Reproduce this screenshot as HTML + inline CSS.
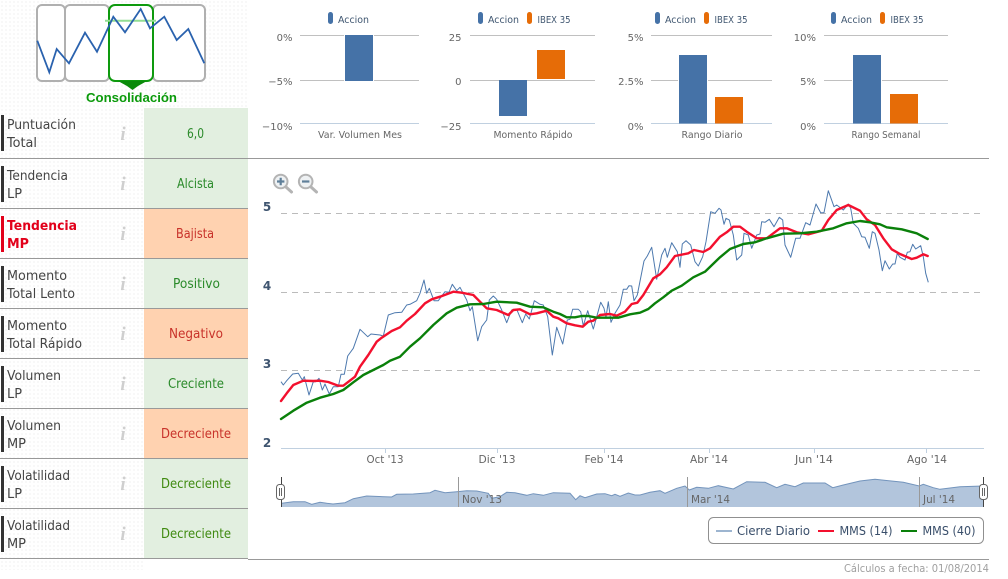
<!DOCTYPE html>
<html lang="es"><head><meta charset="utf-8"><title>Consolidación</title>
<style>
html,body{margin:0;padding:0;background:#fff;width:1008px;height:579px;overflow:hidden}
svg{display:block}
text{font-family:"DejaVu Sans","Liberation Sans",sans-serif}
.lab{font-size:13px;fill:#444}
.val{font-size:13px;text-anchor:middle}
.g{fill:#2a8a2a}.r{fill:#c8322a}
.i{font-family:"Liberation Serif",serif;font-style:italic;font-weight:bold;font-size:19px;fill:#cfcfcf;text-anchor:middle}
.ax{font-size:10px;fill:#666;text-anchor:end}
.cap{font-size:10px;fill:#666;text-anchor:middle}
.lg{font-size:10px;fill:#3f5670}
.tk{font-size:11px;fill:#666;text-anchor:middle}
.nv{font-size:11px;fill:#666}
.le{font-size:12px;fill:#3a4f6b}
.grid{stroke:#c0c0c0;stroke-width:1;fill:none}
</style></head><body>
<svg width="1008" height="579" viewBox="0 0 1008 579" xmlns="http://www.w3.org/2000/svg">
<defs><pattern id="d" width="4" height="4" patternUnits="userSpaceOnUse"><rect x="1" y="1" width="2" height="2" fill="#f8f8f8"/></pattern></defs>
<rect width="1008" height="579" fill="#fff"/>
<rect x="0" y="0" width="248" height="108" fill="url(#d)"/>
<rect x="0" y="108" width="144" height="462" fill="url(#d)"/>

<!-- pattern icon -->
<g fill="#fff" stroke="#b0b0b0" stroke-width="2">
<rect x="37" y="5" width="28" height="76" rx="5"/>
<rect x="65" y="5" width="44" height="76" rx="5"/>
<rect x="153" y="5" width="52" height="76" rx="5"/>
</g>
<rect x="109" y="5" width="44" height="76" rx="6" fill="#fff" stroke="#0e9a0e" stroke-width="2"/>
<path d="M118 81H147L138 86L132.500 90L127 86Z" fill="#0a8a0a"/>
<line x1="105" y1="20.700" x2="156" y2="20.700" stroke="#93de93" stroke-width="2"/>
<polyline fill="none" stroke="#2a62ae" stroke-width="1.800" points="37.300,40.700 49.300,72.300 56.700,49 69,63.300 85,32.700 97,51.700 113.300,16.700 125,32.300 140.700,9 150,28.300 164.300,16.700 176.700,40 188.300,29 204.300,63.300"/>
<text x="86" y="102" font-size="13" font-weight="bold" fill="#0b9a0b" textLength="91" lengthAdjust="spacingAndGlyphs" style="font-family:'Liberation Sans',sans-serif">Consolidación</text>

<!-- table cells -->
<rect x="144" y="108" width="104" height="100" fill="#e2efe0"/>
<rect x="144" y="208" width="104" height="50" fill="#ffd2b0"/>
<rect x="144" y="258" width="104" height="50" fill="#e2efe0"/>
<rect x="144" y="308" width="104" height="50" fill="#ffd2b0"/>
<rect x="144" y="358" width="104" height="50" fill="#e2efe0"/>
<rect x="144" y="408" width="104" height="50" fill="#ffd2b0"/>
<rect x="144" y="458" width="104" height="100" fill="#e2efe0"/>
<g stroke="#999" stroke-width="1">
<line x1="0" y1="158.500" x2="989" y2="158.500"/>
<line x1="0" y1="208.500" x2="248" y2="208.500"/>
<line x1="0" y1="258.500" x2="248" y2="258.500"/>
<line x1="0" y1="308.500" x2="248" y2="308.500"/>
<line x1="0" y1="358.500" x2="248" y2="358.500"/>
<line x1="0" y1="408.500" x2="248" y2="408.500"/>
<line x1="0" y1="458.500" x2="248" y2="458.500"/>
<line x1="0" y1="508.500" x2="248" y2="508.500"/>
<line x1="0" y1="558.500" x2="248" y2="558.500"/>
<line x1="248" y1="559.500" x2="989" y2="559.500"/>
</g>
<g fill="#333">
<rect x="1" y="115" width="3" height="36"/><rect x="1" y="166" width="3" height="36"/>
<rect x="1" y="216" width="3" height="36" fill="#e2001a"/>
<rect x="1" y="266" width="3" height="36"/><rect x="1" y="316" width="3" height="36"/><rect x="1" y="366" width="3" height="36"/><rect x="1" y="416" width="3" height="36"/><rect x="1" y="466" width="3" height="36"/><rect x="1" y="516" width="3" height="36"/>
</g>
<text class="lab" x="7" y="129" textLength="69" lengthAdjust="spacingAndGlyphs">Puntuación</text>
<text class="lab" x="7" y="147" textLength="30" lengthAdjust="spacingAndGlyphs">Total</text>
<text class="lab" x="7" y="180" textLength="61" lengthAdjust="spacingAndGlyphs">Tendencia</text>
<text class="lab" x="7" y="198" textLength="15" lengthAdjust="spacingAndGlyphs">LP</text>
<text class="lab" x="7" y="230" textLength="70" lengthAdjust="spacingAndGlyphs" style="font-weight:bold;fill:#e2001a">Tendencia</text>
<text class="lab" x="7" y="248" textLength="22" lengthAdjust="spacingAndGlyphs" style="font-weight:bold;fill:#e2001a">MP</text>
<text class="lab" x="7" y="280" textLength="60" lengthAdjust="spacingAndGlyphs">Momento</text>
<text class="lab" x="7" y="298" textLength="68" lengthAdjust="spacingAndGlyphs">Total Lento</text>
<text class="lab" x="7" y="330" textLength="60" lengthAdjust="spacingAndGlyphs">Momento</text>
<text class="lab" x="7" y="348" textLength="75" lengthAdjust="spacingAndGlyphs">Total Rápido</text>
<text class="lab" x="7" y="380" textLength="54" lengthAdjust="spacingAndGlyphs">Volumen</text>
<text class="lab" x="7" y="398" textLength="15" lengthAdjust="spacingAndGlyphs">LP</text>
<text class="lab" x="7" y="430" textLength="54" lengthAdjust="spacingAndGlyphs">Volumen</text>
<text class="lab" x="7" y="448" textLength="19" lengthAdjust="spacingAndGlyphs">MP</text>
<text class="lab" x="7" y="480" textLength="63" lengthAdjust="spacingAndGlyphs">Volatilidad</text>
<text class="lab" x="7" y="498" textLength="15" lengthAdjust="spacingAndGlyphs">LP</text>
<text class="lab" x="7" y="530" textLength="63" lengthAdjust="spacingAndGlyphs">Volatilidad</text>
<text class="lab" x="7" y="548" textLength="19" lengthAdjust="spacingAndGlyphs">MP</text>

<text class="i" x="123" y="140">i</text><text class="i" x="123" y="190">i</text><text class="i" x="123" y="240">i</text><text class="i" x="123" y="290">i</text><text class="i" x="123" y="340">i</text><text class="i" x="123" y="390">i</text><text class="i" x="123" y="440">i</text><text class="i" x="123" y="490">i</text><text class="i" x="123" y="540">i</text>

<text class="val g" x="195.500" y="138" textLength="17" lengthAdjust="spacingAndGlyphs">6,0</text>
<text class="val g" x="195.500" y="188" textLength="37" lengthAdjust="spacingAndGlyphs">Alcista</text>
<text class="val r" x="195" y="238" textLength="38" lengthAdjust="spacingAndGlyphs">Bajista</text>
<text class="val g" x="196.500" y="288" textLength="47" lengthAdjust="spacingAndGlyphs">Positivo</text>
<text class="val r" x="196" y="338" textLength="54" lengthAdjust="spacingAndGlyphs">Negativo</text>
<text class="val g" x="196" y="388" textLength="56" lengthAdjust="spacingAndGlyphs">Creciente</text>
<text class="val r" x="196" y="438" textLength="70" lengthAdjust="spacingAndGlyphs">Decreciente</text>
<text class="val" fill="#3f8a10" x="196" y="488" textLength="70" lengthAdjust="spacingAndGlyphs">Decreciente</text>
<text class="val" fill="#3f8a10" x="196" y="538" textLength="70" lengthAdjust="spacingAndGlyphs">Decreciente</text>

<!-- bar chart 1 -->
<g class="grid"><path d="M300 35.500H419M300 80.500H419"/></g><path d="M300 123.500H419" stroke="#c0d0e0" fill="none"/>
<rect x="344" y="35" width="30" height="47" fill="#fff"/><rect x="345" y="35" width="28" height="46" fill="#4572a7"/>
<rect x="328" y="12" width="5" height="12" rx="2.500" fill="#4572a7"/>
<text class="lg" x="338" y="23" textLength="31" lengthAdjust="spacingAndGlyphs">Accion</text>
<text class="ax" x="292.500" y="41">0%</text><text class="ax" x="292.500" y="85">−5%</text><text class="ax" x="292.500" y="130">−10%</text>
<text class="cap" x="360" y="138" textLength="84" lengthAdjust="spacingAndGlyphs">Var. Volumen Mes</text>

<!-- bar chart 2 -->
<g class="grid"><path d="M470 35.500H595M470 80.500H595"/></g><path d="M470 123.500H595" stroke="#c0d0e0" fill="none"/>
<rect x="499" y="80" width="28" height="36" fill="#4572a7"/>
<rect x="537" y="50" width="28" height="29" fill="#e66c07"/>
<rect x="478" y="12" width="5" height="12" rx="2.500" fill="#4572a7"/><rect x="527" y="12" width="5" height="12" rx="2.500" fill="#e66c07"/>
<text class="lg" x="488" y="23" textLength="31" lengthAdjust="spacingAndGlyphs">Accion</text>
<text class="lg" x="537.500" y="23" textLength="33" lengthAdjust="spacingAndGlyphs">IBEX 35</text>
<text class="ax" x="461.500" y="41">25</text><text class="ax" x="461.500" y="85">0</text><text class="ax" x="461.500" y="130">−25</text>
<text class="cap" x="533" y="138" textLength="79" lengthAdjust="spacingAndGlyphs">Momento Rápido</text>

<!-- bar chart 3 -->
<g class="grid"><path d="M651 35.500H772M651 80.500H772"/></g><path d="M651 123.500H772" stroke="#c0d0e0" fill="none"/>
<rect x="678" y="55" width="30" height="68" fill="#fff"/>
<rect x="679" y="55" width="28" height="68.500" fill="#4572a7"/>
<rect x="715" y="97" width="28" height="26.500" fill="#e66c07"/>
<rect x="655" y="12" width="5" height="12" rx="2.500" fill="#4572a7"/><rect x="704" y="12" width="5" height="12" rx="2.500" fill="#e66c07"/>
<text class="lg" x="665" y="23" textLength="31" lengthAdjust="spacingAndGlyphs">Accion</text>
<text class="lg" x="714.500" y="23" textLength="33" lengthAdjust="spacingAndGlyphs">IBEX 35</text>
<text class="ax" x="643.500" y="41">5%</text><text class="ax" x="643.500" y="85">2.5%</text><text class="ax" x="643.500" y="130">0%</text>
<text class="cap" x="712" y="138" textLength="61" lengthAdjust="spacingAndGlyphs">Rango Diario</text>

<!-- bar chart 4 -->
<g class="grid"><path d="M824 35.500H948M824 80.500H948"/></g><path d="M824 123.500H948" stroke="#c0d0e0" fill="none"/>
<rect x="852" y="55" width="30" height="68" fill="#fff"/>
<rect x="853" y="55" width="28" height="68.500" fill="#4572a7"/>
<rect x="890" y="94" width="28" height="29.500" fill="#e66c07"/>
<rect x="831" y="12" width="5" height="12" rx="2.500" fill="#4572a7"/><rect x="880" y="12" width="5" height="12" rx="2.500" fill="#e66c07"/>
<text class="lg" x="841" y="23" textLength="31" lengthAdjust="spacingAndGlyphs">Accion</text>
<text class="lg" x="890.500" y="23" textLength="33" lengthAdjust="spacingAndGlyphs">IBEX 35</text>
<text class="ax" x="816" y="41">10%</text><text class="ax" x="816" y="85">5%</text><text class="ax" x="816" y="130">0%</text>
<text class="cap" x="886" y="138" textLength="69" lengthAdjust="spacingAndGlyphs">Rango Semanal</text>

<!-- zoom icons -->
<g fill="none">
<line x1="286" y1="187" x2="291.500" y2="192" stroke="#b4b4b4" stroke-width="3" stroke-linecap="round"/>
<circle cx="280.700" cy="181.500" r="6.800" fill="#eef1f3" stroke="#b4b4b4" stroke-width="2"/>
<path d="M277 181.500H284.400M280.700 177.800V185.200" stroke="#5f7f99" stroke-width="2.200"/>
<line x1="311" y1="187" x2="316.500" y2="192" stroke="#b4b4b4" stroke-width="3" stroke-linecap="round"/>
<circle cx="305.700" cy="181.500" r="6.800" fill="#eef1f3" stroke="#b4b4b4" stroke-width="2"/>
<path d="M302 181.500H309.400" stroke="#5f7f99" stroke-width="2.200"/>
</g>

<!-- main chart -->
<g stroke="#bbb" stroke-width="1" stroke-dasharray="6 5" fill="none">
<line x1="281" y1="213.500" x2="984" y2="213.500"/>
<line x1="281" y1="292.500" x2="984" y2="292.500"/>
<line x1="281" y1="370.500" x2="984" y2="370.500"/>
</g>
<line x1="281" y1="448.500" x2="984" y2="448.500" stroke="#c0d0e0"/>
<g stroke="#c0d0e0"><path d="M385.500 448V453M497.500 448V453M604.500 448V453M709.500 448V453M814.500 448V453M926.500 448V453" fill="none"/></g>
<g text-anchor="middle" style="font-size:12px;font-weight:bold">
<text x="267" y="211" fill="#3f5570">5</text><text x="267" y="290" fill="#3f5570">4</text><text x="267" y="368" fill="#3f5570">3</text><text x="267" y="447" fill="#3f5570">2</text>
</g>
<text class="tk" x="385" y="463" textLength="37" lengthAdjust="spacingAndGlyphs">Oct '13</text>
<text class="tk" x="497" y="463" textLength="37" lengthAdjust="spacingAndGlyphs">Dic '13</text>
<text class="tk" x="604" y="463" textLength="39" lengthAdjust="spacingAndGlyphs">Feb '14</text>
<text class="tk" x="709" y="463" textLength="38" lengthAdjust="spacingAndGlyphs">Abr '14</text>
<text class="tk" x="814" y="463" textLength="38" lengthAdjust="spacingAndGlyphs">Jun '14</text>
<text class="tk" x="927" y="463" textLength="40" lengthAdjust="spacingAndGlyphs">Ago '14</text>

<polyline fill="none" stroke="#4d79ae" stroke-width="1" stroke-linejoin="round" points="281,381.700 283.300,385 286.700,380.700 292.700,374 298.300,373.300 302.300,380 304.300,376.700 309,395 313.300,381.700 315.700,381.700 319,378.300 322.300,390 325,384 329.300,394 333.300,386.700 338.300,386.700 341,374.300 344.300,374.300 347.700,356 353.300,348.300 360,329.300 367.700,336.700 371,334 380,335 383.300,336 388.300,315 395,312.700 401.700,312.300 406.700,305 410,304.300 416.700,300.700 420,293.300 424,280 426.700,293.300 429.300,288.300 434,300.700 438.300,300.700 445,291.700 449,292.300 452.300,284.300 456.700,290.700 460,287.300 466.700,300 470,310.700 472.300,306.700 477.700,340.700 481.700,326.700 486.700,320 489.300,300 493.300,296 496.700,299.300 501.700,310 506.700,322.700 511.700,310 516.700,309.300 522.300,322.700 525.700,314 529.300,319 534.300,300.700 540,304.300 543.300,305 547.700,316.700 552.300,355 556.700,327.300 562.700,344 567.300,320 570,319.300 572.700,309.300 578.300,309.300 580.700,311.700 583.300,326 587.700,310.700 593.300,329 600.700,302.300 604,308.300 606,317.300 608.300,301.700 611,322.300 615,313.300 620,305 623.300,289.300 626.700,289.300 629,285.700 631.700,286 634,300.700 637.300,295 644,261 647.300,256 651.700,247.300 656.700,279.300 661.700,255 665,248.300 667.300,257.300 671.700,242.700 677.300,251.700 680,267.300 682.300,244 686,240.700 690.700,245 695,261.700 698.300,266 702.700,256.700 706,241.700 710.700,211.700 715,213.300 719,208.300 721,210 724,224.300 726,218.300 729.300,220 733.300,235 736.700,260 741.700,255 744,233.300 748.300,235 751.700,248.300 756.700,235 760,234 761.700,221.700 765,222.300 769.300,219.300 774,226.700 779.300,217.300 782.700,220 785,245 790.700,257.300 795.700,238.300 800,238.300 805.700,222.700 810,225 816,204 820.700,212.700 824,212.700 828.300,190.700 834,206.700 836.700,205 843.300,210 848.300,204 850.700,208.300 853.300,223.300 858.300,228.300 861.700,236.700 865,237.300 869.300,248.300 872.300,231.700 875,233.300 879,250 882.300,270.700 885,260.700 889.300,269 892.700,264 895,264 897.300,253.300 900,257.300 905,260 907.300,252.300 910,251.700 912.700,244.300 915.700,249 920.700,245.700 923.300,256.700 925.700,273.300 928.300,282.300"/>
<polyline fill="none" stroke="#f3102e" stroke-width="2.400" stroke-linejoin="round" stroke-linecap="round" points="281,401 286.700,393.300 293.300,385 303.300,380.700 313.300,381 320,380.700 328.300,382 338.300,385.700 343.300,385.700 355,376.700 360,366.700 368.300,355 376.700,341.700 381.700,337.700 391.700,331 400,327.300 406.700,320.700 415,314 425,303.300 431.700,299.300 440,296.700 453.300,291.700 461.700,292.700 473.300,295 480,301.700 486.700,308.300 496.700,310 508.300,315 513.300,310 520,309.300 530,314.300 536.700,313.300 546.700,310.700 553.300,316.700 558.300,318.300 566.700,323.300 575,325.300 582.700,326.700 588.300,321.700 593.300,320.700 600,315 610,314 616.700,315.700 625,311.700 631.700,304 637.300,302.700 643.300,295 653.300,278.300 660,274.300 666.700,267.300 675,256 688.300,253.300 694,250 703.300,252 710,248.300 720,236.700 726.700,232.300 733.300,226.700 740,226.700 746.700,231.700 756.700,238.300 766.700,238.300 780,228.300 786.700,228.300 796.700,232.300 808.300,234.300 821.700,230.700 828.300,220 836.700,210 848.300,205 860,210.700 866.700,219.300 875,225 883.300,238.300 891.700,249.300 900,254 911.700,259 916.700,257.700 923.300,254.300 927.700,256"/>
<polyline fill="none" stroke="#0a800a" stroke-width="2.400" stroke-linejoin="round" stroke-linecap="round" points="281,419 293.300,410.700 306.700,402.700 320,397.700 333.300,394 343.300,390 353.300,382.300 363.300,375 383.300,365 390,360.700 400,356.700 410,346.700 420,338.300 433.300,325 446.700,313.300 456.700,307.700 470,304.300 483.300,304 496.700,301.700 516.700,302.700 530,306.700 543.300,307.300 553.300,311.700 560,314 566.700,317.300 575,317.300 581.700,316 588.300,316 596.700,317.700 618.300,317.700 630,314.300 640,312.700 648.300,309 655,303.300 663.300,297.300 671.700,290.700 681.700,285.700 693.300,277.300 705,271.700 720,257.300 730,249 743.300,244 755,242.300 766.700,238.300 783.300,233.700 800,233.300 816.700,231.700 833.300,228.300 846.700,223.300 860,221 870,222.300 880,224.300 886.700,227.300 901.700,229.300 916.700,233.300 927.700,239"/>

<!-- navigator -->
<polygon fill="#b2c5dc" points="281.700,503.300 293.300,501.700 305,501.700 311.700,504.300 320,502.300 326.700,503.300 333,504 345,502.700 353.300,498.700 366.700,496 391.700,497 396.700,494.300 413.300,494 430,492.700 435,490.300 445,492.700 456.700,491.700 466.700,490.700 476.700,491 488.300,493.300 491.700,498.300 500,496.700 506.700,492.300 515,492.700 526.700,495.300 533.300,493.700 543.300,495.300 553.300,492.700 570,493.300 575.700,499.700 580,495.700 585,497.700 596.700,494 605,493.700 611.700,495.700 615,494.300 620,496.300 628.300,493 635,495 640,495 650,492.300 660,490.700 665,493.300 676.700,488.300 685,486 689.300,490 696.700,487.300 708.300,488.300 718.300,485.700 733.300,489 746.700,481.700 765,482.300 776.700,487.700 785,484.300 795,486.700 803.300,483 825,483 832.700,487.700 843.300,485 860,481 875,479.300 903.300,482.300 919.300,486 923.300,484.300 933.300,487.700 940,489.300 960,486.700 983.300,486 983.300,507 281.700,507"/>
<polyline fill="none" stroke="#7394bc" stroke-width="1" points="281.700,503.300 293.300,501.700 305,501.700 311.700,504.300 320,502.300 326.700,503.300 333,504 345,502.700 353.300,498.700 366.700,496 391.700,497 396.700,494.300 413.300,494 430,492.700 435,490.300 445,492.700 456.700,491.700 466.700,490.700 476.700,491 488.300,493.300 491.700,498.300 500,496.700 506.700,492.300 515,492.700 526.700,495.300 533.300,493.700 543.300,495.300 553.300,492.700 570,493.300 575.700,499.700 580,495.700 585,497.700 596.700,494 605,493.700 611.700,495.700 615,494.300 620,496.300 628.300,493 635,495 640,495 650,492.300 660,490.700 665,493.300 676.700,488.300 685,486 689.300,490 696.700,487.300 708.300,488.300 718.300,485.700 733.300,489 746.700,481.700 765,482.300 776.700,487.700 785,484.300 795,486.700 803.300,483 825,483 832.700,487.700 843.300,485 860,481 875,479.300 903.300,482.300 919.300,486 923.300,484.300 933.300,487.700 940,489.300 960,486.700 983.300,486"/>
<g stroke="#999" stroke-width="1"><path d="M458.500 477V507M687.500 477V507M919.500 477V507" fill="none"/></g>
<text class="nv" x="462" y="503" textLength="40" lengthAdjust="spacingAndGlyphs">Nov '13</text>
<text class="nv" x="691" y="503" textLength="39" lengthAdjust="spacingAndGlyphs">Mar '14</text>
<text class="nv" x="923" y="503" textLength="32" lengthAdjust="spacingAndGlyphs">Jul '14</text>
<g stroke="#444" stroke-width="1" fill="none"><path d="M281.500 477V507M983.500 477V507"/></g>
<g stroke="#666" stroke-width="1" fill="#fff">
<rect x="276.500" y="484.500" width="8" height="15" rx="3"/><rect x="979.500" y="484.500" width="8" height="15" rx="3"/>
<path d="M279.500 488V496M281.500 488V496M982.500 488V496M984.500 488V496" fill="none"/>
</g>

<!-- legend -->
<rect x="708.500" y="517.500" width="275" height="26" rx="5" fill="#fff" stroke="#909090"/>
<line x1="716" y1="531" x2="732" y2="531" stroke="#9db5d0" stroke-width="2"/>
<text class="le" x="737" y="535" textLength="73" lengthAdjust="spacingAndGlyphs">Cierre Diario</text>
<line x1="818" y1="531" x2="834" y2="531" stroke="#f3102e" stroke-width="2"/>
<text class="le" x="839.500" y="535" textLength="53" lengthAdjust="spacingAndGlyphs">MMS (14)</text>
<line x1="901" y1="531" x2="917" y2="531" stroke="#0a800a" stroke-width="2"/>
<text class="le" x="922.500" y="535" textLength="53" lengthAdjust="spacingAndGlyphs">MMS (40)</text>

<text x="844" y="572" font-size="11" fill="#a0a0a0" textLength="145" lengthAdjust="spacingAndGlyphs">Cálculos a fecha: 01/08/2014</text>
</svg>
</body></html>
